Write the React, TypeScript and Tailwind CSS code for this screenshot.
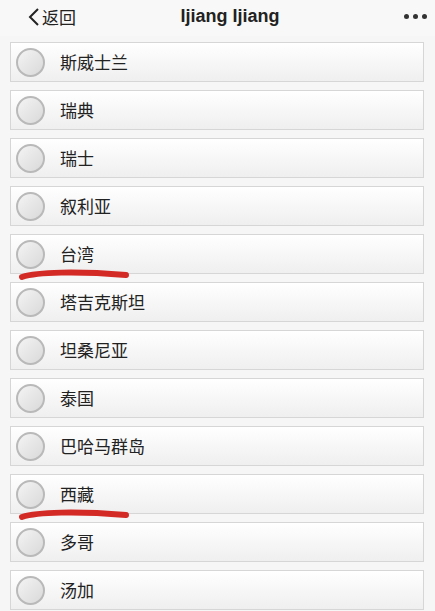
const countries = ["斯威士兰", "瑞典", "瑞士", "叙利亚", "台湾", "塔吉克斯坦", "坦桑尼亚", "泰国", "巴哈马群岛", "西藏", "多哥", "汤加"];

function Radio() {
  return (
    <div className="w-[29px] h-[29px] rounded-full border-2 border-[#b9b9b9] bg-gradient-to-br from-[#f4f4f4] to-[#d9d9d9] shrink-0" />
  );
}

function Row({ name, marked }: { name: string; marked?: boolean }) {
  return (
    <div className="relative h-[40px] flex items-center border border-[#d6d6d6] bg-gradient-to-b from-white to-[#efefef] pl-[5px]">
      <Radio />
      <span className="ml-[15px] text-[17px] text-[#222]">{name}</span>
      {marked && (
        <svg className="absolute left-[6px] top-[32px]" width="114" height="16" viewBox="0 0 114 16">
          <path d="M5 10 C 20 5, 60 4, 109 8" stroke="#d42a25" strokeWidth="6" fill="none" strokeLinecap="round" />
        </svg>
      )}
    </div>
  );
}

export default function App() {
  return (
    <div className="w-[435px] h-[611px] overflow-hidden bg-[#f6f6f6]" style={{ fontFamily: '"Noto Sans CJK SC", "Liberation Sans", sans-serif' }}>
      <div className="h-[36px] flex items-center px-[28px] pb-[3px] relative bg-[#f8f8f8]">
        <div className="flex items-center text-[17px] text-[#222]">
          <svg width="12" height="20" viewBox="0 0 12 20" className="mr-[2px]">
            <path d="M10 2 L2 10 L10 18" stroke="#222" strokeWidth="2" fill="none" />
          </svg>
          返回
        </div>
        <div className="flex-1 text-center font-bold text-[18px] text-[#222] pr-[20px]" style={{ fontFamily: '"Liberation Sans", sans-serif' }}>Ijiang Ijiang</div>
        <div className="flex gap-[4px] -mr-[20px]">
          <span className="w-[5px] h-[5px] rounded-full bg-[#333]" />
          <span className="w-[5px] h-[5px] rounded-full bg-[#333]" />
          <span className="w-[5px] h-[5px] rounded-full bg-[#333]" />
        </div>
      </div>
      <div className="flex flex-col gap-[8px] pl-[10px] pr-[11px] pt-[6px]">
        {countries.map((c) => (
          <Row key={c} name={c} marked={c === "台湾" || c === "西藏"} />
        ))}
      </div>
    </div>
  );
}
